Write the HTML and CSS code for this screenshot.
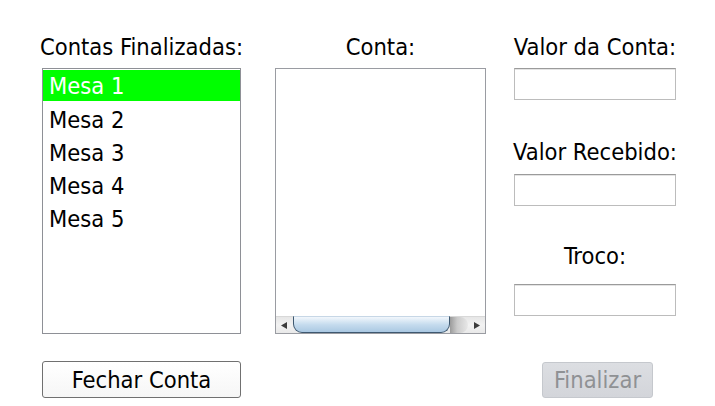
FILE: index.html
```html
<!DOCTYPE html>
<html lang="pt">
<head>
<meta charset="utf-8">
<title>Contas</title>
<link rel="stylesheet" href="styles.css">
</head>
<body>
<div class="app">
  <div class="col col-list">
    <div class="label">Contas Finalizadas:</div>
    <ul class="listbox">
      <li class="item selected">Mesa 1</li>
      <li class="item">Mesa 2</li>
      <li class="item">Mesa 3</li>
      <li class="item">Mesa 4</li>
      <li class="item">Mesa 5</li>
    </ul>
    <button class="btn btn-fechar">Fechar Conta</button>
  </div>
  <div class="col col-conta">
    <div class="label">Conta:</div>
    <div class="textarea">
      <div class="content"></div>
      <div class="hscroll">
        <div class="arrow arrow-left">
          <svg width="7" height="7" viewBox="0 0 7 7"><polygon points="6,0 6,7 0,3.5" fill="#3c3c3c"/></svg>
        </div>
        <div class="track">
          <div class="thumb"></div>
          <div class="thumb-shadow"></div>
        </div>
        <div class="arrow arrow-right">
          <svg width="7" height="7" viewBox="0 0 7 7"><polygon points="1,0 1,7 7,3.5" fill="#3c3c3c"/></svg>
        </div>
      </div>
    </div>
  </div>
  <div class="col col-form">
    <div class="label">Valor da Conta:</div>
    <input class="field f1" type="text">
    <div class="label l2">Valor Recebido:</div>
    <input class="field f2" type="text">
    <div class="label l3">Troco:</div>
    <input class="field f3" type="text">
    <button class="btn btn-finalizar" disabled>Finalizar</button>
  </div>
</div>
</body>
</html>
```

FILE: styles.css
```css
html, body {
  margin: 0;
  padding: 0;
  background: #ffffff;
}
body {
  font-family: "DejaVu Sans Condensed", "DejaVu Sans", "Liberation Sans", sans-serif;
  font-size: 23.5px;
  color: #000;
  width: 715px;
  height: 406px;
  overflow: hidden;
}
.app {
  display: flex;
  align-items: flex-start;
  padding: 34px 0 0 42px;
}
.col {
  display: flex;
  flex-direction: column;
  align-items: center;
}
.col-list { width: 199px; }
.col-conta { width: 211px; margin-left: 34px; }
.col-form { width: 162px; margin-left: 28px; }
.label {
  height: 26px;
  line-height: 26px;
  white-space: nowrap;
}
.listbox {
  list-style: none;
  margin: 8px 0 0 0;
  padding: 1px 0 0 0;
  width: 199px;
  height: 266px;
  box-sizing: border-box;
  border: 1px solid #8e9096;
}
.item {
  height: 33px;
  line-height: 34px;
  padding-left: 6px;
}
.item.selected {
  background: #00ff00;
  color: #ffffff;
  height: 31px;
  line-height: 32px;
  margin-bottom: 2px;
}
.btn {
  font-family: inherit;
  font-size: 23.5px;
  box-sizing: border-box;
  height: 37px;
  padding: 0;
  border-radius: 3px;
}
.btn-fechar {
  margin-top: 27px;
  width: 199px;
  border: 1px solid #707070;
  background: linear-gradient(#ffffff, #f6f6f6);
  color: #000;
}
.textarea {
  margin-top: 8px;
  width: 211px;
  height: 266px;
  box-sizing: border-box;
  border: 1px solid #9a9ca2;
  display: flex;
  flex-direction: column;
}
.content { flex: 1; }
.hscroll {
  height: 16px;
  display: flex;
  background: linear-gradient(#e6e6e6, #f2f2f2 50%, #e9e9e9);
  border-top: 1px solid #d8d8d8;
}
.arrow {
  width: 17px;
  display: flex;
  align-items: center;
  justify-content: center;
}
.track {
  flex: 1;
  display: flex;
}
.thumb {
  width: 157px;
  box-sizing: border-box;
  height: 17px;
  margin-top: -1px;
  border: 1px solid #3e5870;
  border-top-color: #c7d7e6;
  border-radius: 0 0 9px 9px;
  background: linear-gradient(#f2f7fc, #c6dcee 50%, #aac8e2);
}
.thumb-shadow {
  width: 18px;
  height: 16px;
  background: linear-gradient(90deg, #8c8c8c, #c4c4c4 40%, #e6e6e6);
  border-radius: 0 8px 8px 0;
  opacity: 0.85;
}
.field {
  box-sizing: border-box;
  width: 162px;
  height: 32px;
  margin: 0;
  padding: 0 4px;
  border: 1px solid #bcbcbc;
  border-top-color: #9b9b9b;
  box-shadow: inset 0 1px 0 #e4e4e4;
  background: #fff;
  font-family: inherit;
  font-size: 20px;
}
.f1 { margin-top: 8px; }
.l2 { margin-top: 39px; }
.f2 { margin-top: 9px; }
.l3 { margin-top: 37px; }
.f3 { margin-top: 15px; }
.btn-finalizar {
  margin-top: 46px;
  margin-left: 5px;
  width: 111px;
  height: 36px;
  border: 1px solid #c5c8cd;
  background: linear-gradient(#dcdee2, #d3d5da);
  color: #8f9194;
}
```
